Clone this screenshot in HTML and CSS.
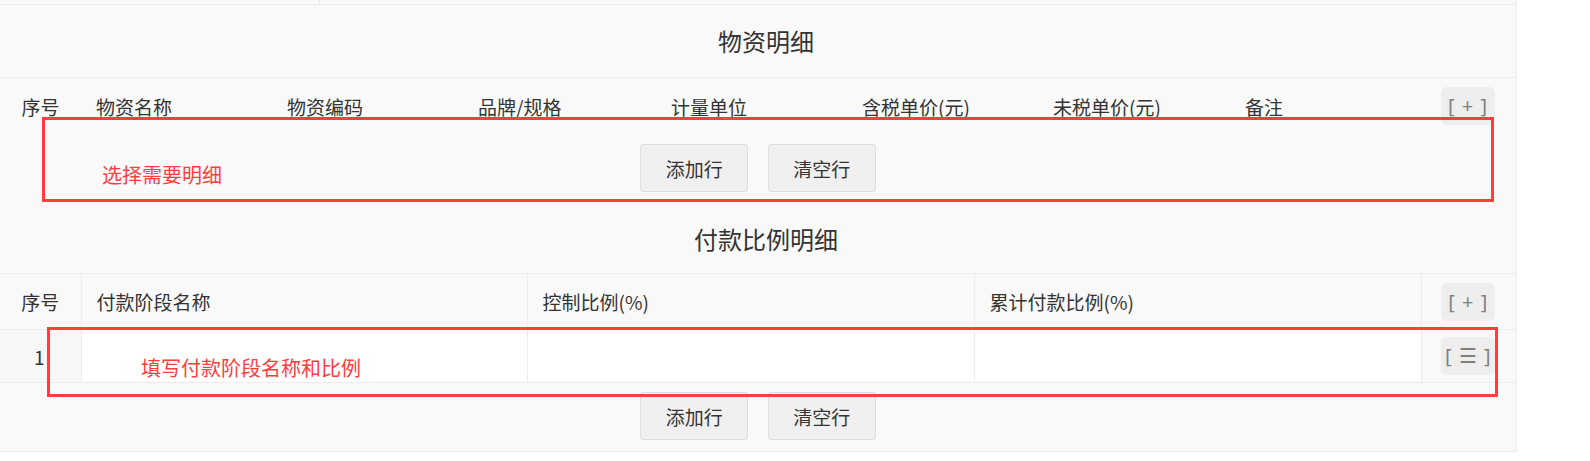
FILE: index.html
```html
<!DOCTYPE html>
<html>
<head>
    <title>明细</title>
    <meta charset="utf-8">
    <link rel="stylesheet" href="styles.css">
</head>
<body>
    <div class="panel">
        <!-- tail of the table above -->
        <div class="prev-row"><div class="prev-cell"></div></div>

        <!-- 物资明细 -->
        <div class="section-title first">物资明细</div>
        <table class="grid goods">
            <colgroup>
                <col class="c-num"><col class="c-goods"><col class="c-goods">
                <col class="c-goods-w"><col class="c-goods"><col class="c-goods">
                <col class="c-goods-m"><col class="c-goods"><col class="c-ops">
            </colgroup>
            <tr class="head-row">
                <th class="num">序号</th>
                <th>物资名称</th>
                <th>物资编码</th>
                <th>品牌/规格</th>
                <th>计量单位</th>
                <th>含税单价(元)</th>
                <th>未税单价(元)</th>
                <th>备注</th>
                <th class="ops"><span class="op-btn">[ + ]</span></th>
            </tr>
        </table>
        <div class="btn-bar">
            <button class="btn">添加行</button>
            <button class="btn">清空行</button>
        </div>

        <!-- 付款比例明细 -->
        <div class="section-title second">付款比例明细</div>
        <table class="grid pay">
            <colgroup>
                <col class="c-num"><col class="c-pay-n"><col class="c-pay">
                <col class="c-pay"><col class="c-ops">
            </colgroup>
            <tr class="head-row">
                <th class="num">序号</th>
                <th>付款阶段名称</th>
                <th>控制比例(%)</th>
                <th>累计付款比例(%)</th>
                <th class="ops"><span class="op-btn">[ + ]</span></th>
            </tr>
            <tr class="data-row">
                <td class="num">1</td>
                <td></td>
                <td></td>
                <td></td>
                <td class="ops"><span class="op-btn">[ ☰ ]</span></td>
            </tr>
        </table>
        <div class="btn-bar last">
            <button class="btn">添加行</button>
            <button class="btn">清空行</button>
        </div>

        <!-- red annotations -->
        <div class="mark mark-goods"><span class="mark-text">选择需要明细</span></div>
        <div class="mark mark-pay"><span class="mark-text">填写付款阶段名称和比例</span></div>
    </div>
</body>
</html>
```

FILE: styles.css
```css
body {
    margin: 0;
    background: #ffffff;
    font-family: "Noto Sans CJK SC", "Noto Sans", sans-serif;
    color: #333333;
}
.panel {
    position: relative;
    width: 1516px;
    background: #f9f9f9;
    border-right: 1px solid #ececec;
    border-bottom: 1px solid #ececec;
}
/* bottom edge of the previous form table */
.prev-row {
    height: 4px;
    border-bottom: 1px solid #ececec;
}
.prev-cell {
    width: 319px;
    height: 4px;
    border-right: 1px solid #ececec;
}
.section-title {
    padding-left: 16px;
    text-align: center;
    font-size: 24px;
    color: #333333;
    border-bottom: 1px solid #ececec;
}
.section-title.first {
    height: 72px;
    line-height: 72px;
}
.section-title.second {
    height: 70px;
    line-height: 72px;
}
.grid {
    width: 1516px;
    table-layout: fixed;
    border-collapse: collapse;
    font-size: 19px;
}
/* column widths */
.c-num { width: 81px; }
.c-goods { width: 191px; }
.c-goods-w { width: 193px; }
.c-goods-m { width: 192px; }
.c-ops { width: 95px; }
.c-pay-n { width: 446px; }
.c-pay { width: 447px; }
.grid th,
.grid td {
    padding: 0 0 0 15px;
    text-align: left;
    font-weight: normal;
    color: #333333;
    white-space: nowrap;
}
.grid .num {
    padding: 0;
    text-align: center;
}
.grid .ops {
    padding: 0;
    text-align: center;
}
.goods .head-row th {
    height: 56px;
}
.pay th,
.pay td {
    border: 1px solid #ececec;
}
.pay tr > :first-child {
    border-left: none;
}
.pay tr > :last-child {
    border-right: none;
}
.pay .head-row th {
    border-top: none;
    height: 55px;
}
.pay .data-row td {
    height: 52px;
    background: #ffffff;
}
.pay .data-row td.num {
    background: #f8f7f7;
    padding-right: 2px;
}
.pay .data-row td.ops {
    background: #f9f9f9;
}
.op-btn {
    display: inline-block;
    width: 54px;
    height: 38px;
    line-height: 38px;
    margin-left: -2px;
    border-radius: 6px;
    background: #eeeeee;
    color: #808080;
    font-family: "Noto Sans", sans-serif;
    font-size: 20px;
    word-spacing: 2px;
    text-align: center;
}
.btn-bar {
    padding: 10px 0 11px;
    text-align: center;
}
.btn-bar.last {
    padding-top: 9px;
}
.btn {
    width: 108px;
    height: 48px;
    margin: 0 8px;
    padding: 0;
    border: 1px solid #dddddd;
    border-radius: 3px;
    background: #f0f0f0;
    color: #333333;
    font-family: "Noto Sans CJK SC", "Noto Sans", sans-serif;
    font-size: 19px;
}
/* red hand-drawn hints over the form */
.mark {
    position: absolute;
    border: 3px solid #ff3d3d;
    box-sizing: border-box;
}
.mark-text {
    position: absolute;
    color: #ff3d3d;
    font-size: 20px;
    line-height: 20px;
    white-space: nowrap;
}
.mark-goods {
    left: 42px;
    top: 117px;
    width: 1452px;
    height: 85px;
}
.mark-goods .mark-text {
    left: 57px;
    top: 45px;
}
.mark-pay {
    left: 47px;
    top: 327px;
    width: 1451px;
    height: 70px;
}
.mark-pay .mark-text {
    left: 91px;
    top: 28px;
}
```
